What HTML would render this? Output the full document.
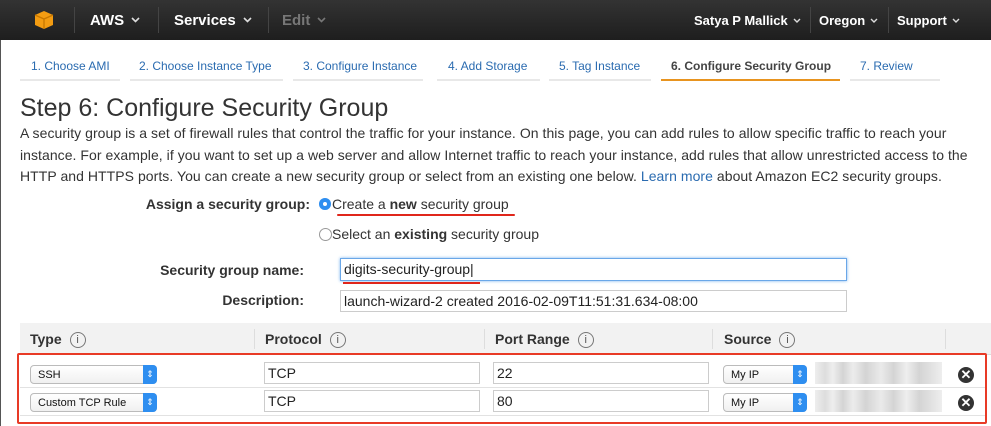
<!DOCTYPE html><html><head><style>
body{margin:0;width:991px;height:426px;overflow:hidden;background:#fff;font-family:"Liberation Sans",sans-serif;position:relative}
.a{position:absolute;white-space:nowrap}
.nav{position:absolute;left:0;top:0;width:991px;height:40px;background:linear-gradient(#333,#1e1e1e);}
.nw{color:#fff;font-weight:bold;font-size:15px;top:12px}
.sep{position:absolute;top:7px;width:1px;height:26px;background:#444}
.tab{font-size:12px;color:#2a6bb0;top:59px}
.tl{position:absolute;top:79px;height:2px;background:#e8e8e8}
.lbl{font-size:14px;font-weight:bold;color:#333;text-align:right}
.inp{position:absolute;border:1px solid #ccc;background:#fff;box-sizing:border-box;font-size:14px;color:#222;padding:3px 5px}
.sel{position:absolute;height:19px;border:1px solid #bbb;border-radius:4px;background:linear-gradient(#fff,#f0f0f0);box-sizing:border-box;font-size:11px;padding:3px 7px;color:#111}
.sel i{position:absolute;right:-1px;top:-1px;width:14px;height:19px;background:#2e8ef0;border-radius:0 4px 4px 0;color:#fff;font-style:normal;font-size:9px;text-align:center;line-height:19px}
.x{position:absolute;width:16px;height:16px;border-radius:50%;background:#333;color:#fff;font-size:13px;font-weight:bold;text-align:center;line-height:16px}
.th{font-size:14px;font-weight:bold;color:#333;top:331px}
.ic{display:inline-block;width:14px;height:14px;border:1px solid #777;border-radius:50%;font-size:11px;text-align:center;line-height:14px;font-weight:normal;margin-left:8px;color:#555;vertical-align:1px}
.blur{position:absolute;background:linear-gradient(90deg,#eee 0,#ddd 8%,#eee 14%,#d4d4d4 22%,#ececec 30%,#d4d4d4 40%,#eaeaea 52%,#d4d4d4 62%,#eee 72%,#d4d4d4 82%,#e2e2e2 92%,#eee 100%)}
.cv{display:inline-block;margin-left:7px;vertical-align:2px}
</style></head><body>
<div class="nav"></div>
<svg class="a" style="left:34px;top:10px" width="20" height="20" viewBox="0 0 20 20"><path d="M10 1 L19 5 L19 15 L10 19 L1 15 L1 5Z" fill="#f39c12"/><path d="M1 5 L10 9 L19 5 M10 9 V19" stroke="#c77700" stroke-width="1.3" fill="none"/></svg>
<div class="sep" style="left:74px"></div>
<div class="a nw" style="left:90px">AWS<svg class="cv" width="9" height="6"><path d="M1 1L4.5 4.5L8 1" stroke="#ddd" stroke-width="1.6" fill="none"/></svg></div>
<div class="sep" style="left:158px"></div>
<div class="a nw" style="left:174px">Services<svg class="cv" width="9" height="6"><path d="M1 1L4.5 4.5L8 1" stroke="#ddd" stroke-width="1.6" fill="none"/></svg></div>
<div class="sep" style="left:268px"></div>
<div class="a nw" style="left:282px;color:#777">Edit<svg class="cv" width="9" height="6"><path d="M1 1L4.5 4.5L8 1" stroke="#777" stroke-width="1.6" fill="none"/></svg></div>
<div class="a nw" style="left:694px;font-size:13px;top:13px">Satya P Mallick<svg class="cv" width="8" height="5" style="margin-left:5px"><path d="M1 1L4 4L7 1" stroke="#ddd" stroke-width="1.4" fill="none"/></svg></div>
<div class="sep" style="left:810px"></div>
<div class="a nw" style="left:819px;font-size:13px;top:13px">Oregon<svg class="cv" width="8" height="5" style="margin-left:5px"><path d="M1 1L4 4L7 1" stroke="#ddd" stroke-width="1.4" fill="none"/></svg></div>
<div class="sep" style="left:888px"></div>
<div class="a nw" style="left:897px;font-size:13px;top:13px">Support<svg class="cv" width="8" height="5" style="margin-left:5px"><path d="M1 1L4 4L7 1" stroke="#ddd" stroke-width="1.4" fill="none"/></svg></div>
<div class="a" style="left:0;top:40px;width:1px;height:386px;background:#555"></div>

<div class="a tab" style="left:31px">1. Choose AMI</div><div class="tl" style="left:20px;width:100px"></div>
<div class="a tab" style="left:139px">2. Choose Instance Type</div><div class="tl" style="left:130px;width:153px"></div>
<div class="a tab" style="left:303px">3. Configure Instance</div><div class="tl" style="left:293px;width:130px"></div>
<div class="a tab" style="left:448px">4. Add Storage</div><div class="tl" style="left:437px;width:103px"></div>
<div class="a tab" style="left:559px">5. Tag Instance</div><div class="tl" style="left:549px;width:102px"></div>
<div class="a tab" style="left:671px;color:#444;font-weight:bold">6. Configure Security Group</div><div class="tl" style="left:661px;width:179px;background:#e8941f"></div>
<div class="a tab" style="left:860px">7. Review</div><div class="tl" style="left:850px;width:90px"></div>

<div class="a" style="left:20px;top:94px;font-size:25px;color:#333">Step 6: Configure Security Group</div>
<div class="a" style="left:20px;top:123px;font-size:14px;line-height:21.5px;color:#333;white-space:normal;width:970px;letter-spacing:0.05px">A security group is a set of firewall rules that control the traffic for your instance. On this page, you can add rules to allow specific traffic to reach your instance. For example, if you want to set up a web server and allow Internet traffic to reach your instance, add rules that allow unrestricted access to the HTTP and HTTPS ports. You can create a new security group or select from an existing one below. <span style="color:#2a6bb0">Learn more</span> about Amazon EC2 security groups.</div>

<div class="a lbl" style="left:100px;width:210px;top:196px">Assign a security group:</div>
<div class="a" style="left:319px;top:198px;width:12px;height:12px;border-radius:50%;background:#2e8ef0;box-shadow:inset 0 0 0 4px #2e8ef0,inset 0 0 0 6px #fff"></div>
<div class="a" style="left:332px;top:196px;font-size:14px;color:#333">Create a <b>new</b> security group</div>
<div class="a" style="left:337px;top:214px;width:178px;height:2px;background:#e0261b;border-radius:1px"></div>
<div class="a" style="left:319px;top:228px;width:11px;height:11px;border-radius:50%;border:1px solid #999"></div>
<div class="a" style="left:332px;top:226px;font-size:14px;color:#333">Select an <b>existing</b> security group</div>

<div class="a lbl" style="left:100px;width:204px;top:262px">Security group name:</div>
<div class="inp" style="left:340px;top:258px;width:507px;height:23px;border:1px solid #6aa7e8;box-shadow:0 0 3px #7ab4f0;padding:2px 3px">digits-security-group|</div>
<div class="a" style="left:343px;top:282px;width:137px;height:2px;background:#e0261b"></div>
<div class="a lbl" style="left:100px;width:204px;top:292px">Description:</div>
<div class="inp" style="left:340px;top:290px;width:507px;height:22px;padding:2px 3px">launch-wizard-2 created 2016-02-09T11:51:31.634-08:00</div>

<div class="a" style="left:20px;top:323px;width:971px;height:31px;background:#f2f2f2;border-bottom:1px solid #ddd"></div>
<div class="a" style="left:254px;top:329px;width:1px;height:20px;background:#ddd"></div>
<div class="a" style="left:484px;top:329px;width:1px;height:20px;background:#ddd"></div>
<div class="a" style="left:712px;top:329px;width:1px;height:20px;background:#ddd"></div>
<div class="a" style="left:945px;top:329px;width:1px;height:20px;background:#ddd"></div>
<div class="a th" style="left:30px">Type<span class="ic">i</span></div>
<div class="a th" style="left:265px">Protocol<span class="ic">i</span></div>
<div class="a th" style="left:495px">Port Range<span class="ic">i</span></div>
<div class="a th" style="left:724px">Source<span class="ic">i</span></div>

<div class="a" style="left:20px;top:387px;width:965px;height:1px;background:#e2e2e2"></div>
<div class="a" style="left:20px;top:415px;width:965px;height:1px;background:#e2e2e2"></div>

<div class="sel" style="left:30px;top:365px;width:127px">SSH<i>⇕</i></div>
<div class="sel" style="left:30px;top:393px;width:127px">Custom TCP Rule<i>⇕</i></div>
<div class="inp" style="left:264px;top:362px;width:216px;height:22px;padding:2px 3px">TCP</div>
<div class="inp" style="left:264px;top:390px;width:216px;height:22px;padding:2px 3px">TCP</div>
<div class="inp" style="left:493px;top:362px;width:216px;height:22px;padding:2px 3px">22</div>
<div class="inp" style="left:493px;top:390px;width:216px;height:22px;padding:2px 3px">80</div>
<div class="sel" style="left:723px;top:365px;width:84px">My IP<i>⇕</i></div>
<div class="sel" style="left:723px;top:393px;width:84px">My IP<i>⇕</i></div>
<div class="blur" style="left:815px;top:362px;width:127px;height:22px"></div>
<div class="blur" style="left:815px;top:390px;width:127px;height:22px"></div>
<div class="x" style="left:958px;top:367px">✕</div>
<div class="x" style="left:958px;top:395px">✕</div>

<div class="a" style="left:17px;top:353px;width:966px;height:67px;border:2px solid #e83a26;border-radius:2px"></div>
</body></html>
